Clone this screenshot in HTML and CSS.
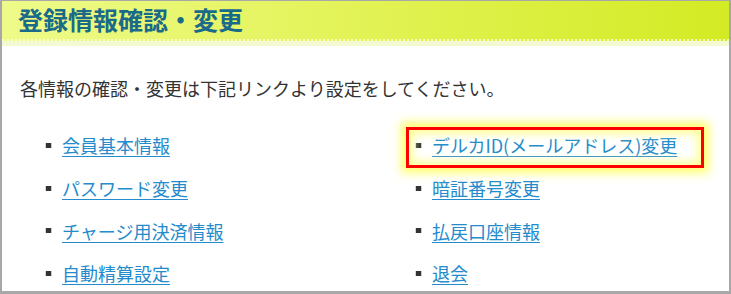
FILE: index.html
```html
<!DOCTYPE html>
<html lang="ja">

<head>
	<meta charset="UTF-8">
	<meta name="viewport" content="width=device-width, initial-scale=1.0">
	<title>登録情報確認・変更</title>
	<link rel="stylesheet" href="styles.css">
</head>

<body>
	<div class="panel">
		<h2 class="panel-title">登録情報確認・変更</h2>

		<div class="panel-body">
			<p class="intro">各情報の確認・変更は下記リンクより設定をしてください。</p>

			<ul class="menu">
				<li><a href="#">会員基本情報</a></li>
				<li class="marked"><a href="#">デルカID(メールアドレス)変更</a></li>
				<li><a href="#">パスワード変更</a></li>
				<li><a href="#">暗証番号変更</a></li>
				<li><a href="#">チャージ用決済情報</a></li>
				<li><a href="#">払戻口座情報</a></li>
				<li><a href="#">自動精算設定</a></li>
				<li><a href="#">退会</a></li>
			</ul>
		</div>
	</div>
</body>
</html>
```

FILE: styles.css
```css
body {
	margin: 0;
	font-family: "Noto Sans CJK JP", "Noto Sans", sans-serif;
	background-color: white;
}

.panel {
	height: 294px;
	box-sizing: border-box;
	border: 2px solid hsl(0, 0%, 66%);
	border-top-width: 1px;
	border-bottom-width: 3px;
	overflow: hidden;
}

.panel-title {
	margin: 0;
	height: 38px;
	padding-left: 16px;
	font-size: 25px;
	line-height: 37px;
	font-weight: bold;
	color: hsl(197, 68%, 32%);
	background: linear-gradient(to right, #eefb8a, #e3f35a 45%, #d3eb24);
	border-bottom: 2px dotted hsla(60, 100%, 92%, 0.8);
	box-shadow: 0 5px 0 hsl(70, 80%, 90%);
}

.panel-body {
	padding: 34px 0 0 18px;
}

.intro {
	margin: 0;
	font-size: 18px;
	line-height: 26px;
	color: #333;
}

.menu {
	list-style: none;
	margin: 23px 0 0;
	padding: 0 0 0 26px;
	display: grid;
	grid-template-columns: 370px 1fr;
	grid-auto-rows: 42.7px;
}

.menu li {
	display: flex;
	align-items: center;
	gap: 11px;
	font-size: 18px;
}

.menu li::before {
	content: "";
	width: 5px;
	height: 5px;
	background-color: #333;
	box-shadow: -1px 0 0 hsla(30, 90%, 60%, 0.5), 1px 0 0 hsla(200, 90%, 60%, 0.5);
}

.menu a {
	color: hsl(203, 70%, 47%);
	text-decoration: underline;
	text-underline-offset: 3px;
}

.menu li.marked {
	position: relative;
}

.menu li.marked::after {
	content: "";
	position: absolute;
	left: -10px;
	top: 3px;
	width: 292px;
	height: 35px;
	border: 3px solid red;
	box-shadow: 0 0 9px 5px hsl(60, 100%, 72%), inset 0 0 9px 4px hsl(60, 100%, 80%);
	pointer-events: none;
}
```
